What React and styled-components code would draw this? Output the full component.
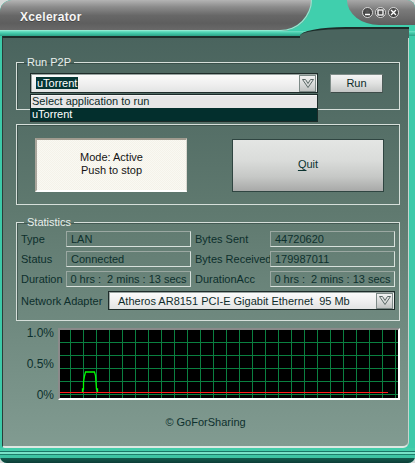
import React from "react";
import styled, { createGlobalStyle } from "styled-components";

const GlobalStyle = createGlobalStyle`
  html, body {
    margin: 0;
    padding: 0;
    background: #d8dbda;
  }
  body {
    font-family: "Liberation Sans", Arial, sans-serif;
    font-size: 11px;
    color: #0d2f2c;
  }
  * {
    box-sizing: border-box;
  }
`;

const Window = styled.div`
  width: 415px;
  height: 463px;
  display: flex;
  flex-direction: column;
  background: #3dcaa9;
  border-radius: 12px 8px 7px 7px;
  overflow: hidden;
`;

const TitleBar = styled.div`
  display: flex;
  height: 36px;
  flex-shrink: 0;
  background: linear-gradient(
    180deg,
    #40cfad 0,
    #40cfad 31px,
    #72e0c6 31px,
    #44ccab 33px,
    #2e9e86 36px
  );
`;

const TitleCap = styled.div`
  width: 312px;
  height: 31px;
  display: flex;
  align-items: center;
  padding: 3px 0 0 20px;
  background: linear-gradient(
    180deg,
    #b4b4b4 0%,
    #8c8c8c 22%,
    #676767 50%,
    #5e5e5e 75%,
    #6a6a6a 100%
  );
  border-bottom-right-radius: 31px 31px;
  box-shadow: inset -1px -1px 0 #8fe9d1;
`;

const TitleText = styled.span`
  color: #f6f6f6;
  font-weight: bold;
  font-size: 12px;
  letter-spacing: 0.3px;
  text-shadow: 0 1px 0 #444;
`;

const RightArea = styled.div`
  flex: 1;
  display: flex;
  flex-direction: column;
`;

const ButtonTab = styled.div`
  align-self: flex-end;
  width: 68px;
  height: 25px;
  display: flex;
  align-items: center;
  justify-content: flex-end;
  gap: 2px;
  padding-right: 16px;
  background: linear-gradient(180deg, #a8a8a8 0%, #7a7a7a 40%, #5e5e5e 100%);
  border-bottom-left-radius: 32px 25px;
`;

const CapButton = styled.div`
  width: 11px;
  height: 11px;
  border-radius: 50%;
  background: radial-gradient(circle at 50% 35%, #5a5a5a 0%, #2e2e2e 100%);
  border: 1px solid #d4d4d4;
  display: flex;
  align-items: center;
  justify-content: center;
`;

const Bump = styled.div`
  margin-top: auto;
  margin-left: -12px;
  margin-right: 6px;
  margin-bottom: -2px;
  height: 11px;
  background: #4a645e;
  border-top: 2px solid #1c2d2a;
  border-top-left-radius: 46px 9px;
  position: relative;
  z-index: 1;
`;

const Body = styled.div`
  flex: 1;
  display: flex;
  padding: 0 6px 0 2px;
  min-height: 0;
`;

const Panel = styled.div`
  flex: 1;
  display: flex;
  flex-direction: column;
  padding: 0 8px 0 13px;
  background: linear-gradient(180deg, #4a645e 0%, #5f796f 42%, #819b91 100%);
  border-top: 2px solid #1c2d2a;
  border-left: 1px solid #2a3d39;
  border-right: 1px solid #c6d4ce;
  border-bottom: 2px solid #dde7e2;
  border-bottom-right-radius: 6px;
  border-bottom-left-radius: 3px;
`;

const Group = styled.fieldset`
  margin: ${(p) => p.$top}px 0 0;
  padding: ${(p) => p.$pad};
  border: 1px solid #d6dfda;
  box-shadow: inset 1px 1px 0 rgba(30, 50, 46, 0.45);
  min-width: 0;
`;

const Legend = styled.legend`
  margin-left: ${(p) => p.$offset}px;
  padding: 0 3px;
  color: #e9efec;
  font-size: 11px;
  line-height: 12px;
`;

const Row = styled.div`
  display: flex;
  align-items: center;
  justify-content: ${(p) => p.$justify || "flex-start"};
`;

const ComboWrap = styled.div`
  position: relative;
  width: ${(p) => p.$width}px;
  height: ${(p) => p.$height}px;
`;

const Combo = styled.div`
  width: 100%;
  height: 100%;
  display: flex;
  align-items: center;
  padding-left: ${(p) => p.$indent}px;
  border: 1px solid #1e2c2a;
  box-shadow: inset 1px 1px 0 #9aa5a2;
  background: linear-gradient(180deg, #fcfcfc 0%, #eeeeee 60%, #e2e4e3 100%);
  color: #102c2a;
  white-space: pre;
`;

const Selected = styled.span`
  background: #063634;
  color: #ffffff;
  line-height: 12px;
  padding: 0 1px;
`;

const DropButton = styled.div`
  margin-left: auto;
  margin-right: 1px;
  width: 17px;
  height: ${(p) => p.$height}px;
  display: flex;
  align-items: center;
  justify-content: center;
  border: 1px solid #7d8a87;
  background: linear-gradient(180deg, #f2f2f2 0%, #d6d8d7 60%, #bfc2c1 100%);
`;

const DropList = styled.div`
  position: absolute;
  top: calc(100% + 1px);
  left: 0;
  width: 100%;
  border: 1px solid #1c2b29;
  z-index: 2;
`;

const DropItem = styled.div`
  height: 13px;
  line-height: 13px;
  padding-left: 1px;
  background: ${(p) => (p.$active ? "#032f2d" : "#e6e6e6")};
  color: ${(p) => (p.$active ? "#ffffff" : "#0c2a28")};
  box-shadow: ${(p) => (p.$active ? "none" : "inset 0 1px 0 #f6f6f6")};
`;

const SmallButton = styled.div`
  margin-left: 12px;
  width: 53px;
  height: 19px;
  display: flex;
  align-items: center;
  justify-content: center;
  border: 1px solid #7e8c88;
  border-bottom-color: #3e4c49;
  border-right-color: #4e5c59;
  background: linear-gradient(180deg, #f4f4f4 0%, #e0e1e0 50%, #c4c6c5 100%);
  color: #0c2a28;
`;

const ModeButton = styled.div`
  width: 152px;
  height: 54px;
  display: flex;
  flex-direction: column;
  align-items: center;
  justify-content: center;
  line-height: 13px;
  padding-bottom: 2px;
  color: #141414;
  background-color: #faf9f3;
  background-image: linear-gradient(
      45deg,
      rgba(205, 198, 170, 0.14) 25%,
      transparent 25%,
      transparent 75%,
      rgba(205, 198, 170, 0.14) 75%
    ),
    linear-gradient(
      45deg,
      rgba(205, 198, 170, 0.14) 25%,
      transparent 25%,
      transparent 75%,
      rgba(205, 198, 170, 0.14) 75%
    );
  background-size: 2px 2px;
  background-position: 0 0, 1px 1px;
  border-top: 2px solid #a09b8f;
  border-left: 2px solid #aaa69c;
  border-right: 1px solid #d9d7cf;
  border-bottom: 2px solid #ffffff;
`;

const QuitButton = styled.div`
  width: 152px;
  height: 53px;
  display: flex;
  align-items: center;
  justify-content: center;
  padding-bottom: 2px;
  color: #0c3431;
  border: 1px solid #2f4541;
  background: linear-gradient(
    180deg,
    #e4e6e4 0%,
    #dadcda 40%,
    #c6c8c6 72%,
    #a8a9a8 100%
  );
  u {
    text-underline-offset: 2px;
  }
`;

const StatsGrid = styled.div`
  display: grid;
  grid-template-columns: 45px 125px 79px 125px;
  grid-auto-rows: 16px;
  row-gap: 4px;
  align-items: center;
`;

const StatLabel = styled.div`
  color: #0d2f2c;
  padding-left: ${(p) => (p.$second ? 4 : 0)}px;
  white-space: nowrap;
`;

const StatField = styled.div`
  height: 16px;
  display: flex;
  align-items: center;
  padding-left: ${(p) => (p.$center ? 0 : 4)}px;
  justify-content: ${(p) => (p.$center ? "center" : "flex-start")};
  border-top: 1px solid #9ba8a2;
  border-left: 1px solid #9ba8a2;
  border-right: 1px solid #d8e1dc;
  border-bottom: 1px solid #d8e1dc;
  color: #0d302d;
  white-space: pre;
`;

const AdapterRow = styled.div`
  display: flex;
  align-items: center;
  margin-top: 4px;
`;

const AdapterLabel = styled.div`
  width: 87px;
  color: #0d2f2c;
  white-space: nowrap;
`;

const GraphRow = styled.div`
  display: flex;
  margin-top: 7px;
  gap: 4px;
`;

const Scale = styled.div`
  width: 38px;
  height: 74px;
  margin-top: -1px;
  display: flex;
  flex-direction: column;
  justify-content: space-between;
  align-items: flex-end;
  font-size: 12px;
  line-height: 12px;
  color: #0d302d;
`;

const GraphBox = styled.div`
  width: 342px;
  height: 72px;
  background: #000;
  border-top: 2px solid #8a8a8a;
  border-left: 2px solid #8a8a8a;
  border-right: 2px solid #ffffff;
  border-bottom: 2px solid #ffffff;
  svg {
    display: block;
  }
`;

const Copyright = styled.div`
  margin-top: 15px;
  padding-right: 5px;
  text-align: center;
  line-height: 13px;
  color: #0e302d;
`;

const BottomFrame = styled.div`
  height: 15px;
  flex-shrink: 0;
  background: linear-gradient(
    180deg,
    #44cdaa 0,
    #44cdaa 3px,
    #1b7566 3px,
    #1b7566 4px,
    #78e2c8 4px,
    #78e2c8 6px,
    #1d7d6a 6px,
    #1d7d6a 7px,
    #3dc3a3 7px,
    #3dc3a3 10px,
    #13594d 10px,
    #0d3d36 15px
  );
`;

const Chevron = () => (
  <svg width="12" height="9" viewBox="0 0 12 9">
    <polygon
      points="0.5,0.5 3.5,0.5 6,4.5 8.5,0.5 11.5,0.5 6,8.5"
      fill="none"
      stroke="#5a6866"
      strokeWidth="1"
    />
  </svg>
);

const Graph = () => {
  const vx = Array.from({ length: 26 }, (_, i) => 10.5 + i * 13);
  const hy = [12.5, 25.5, 38.5, 51.5, 64.5];
  return (
    <svg width="338" height="68" viewBox="0 0 338 68" shapeRendering="crispEdges">
      {vx.map((x) => (
        <line key={x} x1={x} y1="0" x2={x} y2="68" stroke="#0a8040" strokeWidth="1" />
      ))}
      {hy.map((y) => (
        <line key={y} x1="0" y1={y} x2="338" y2={y} stroke="#0a8040" strokeWidth="1" />
      ))}
      <line x1="0" y1="62.5" x2="328" y2="62.5" stroke="#ff1a1a" strokeWidth="1" />
      <polyline
        points="22.5,62 22.5,59 23.5,59 23.5,52 24.5,46 25.5,42 34.5,42 35.5,45.5 36.5,59 37.5,59 37.5,62"
        fill="none"
        stroke="#00ff00"
        strokeWidth="1.3"
        shapeRendering="auto"
      />
    </svg>
  );
};

export default function App() {
  return (
    <>
      <GlobalStyle />
      <Window>
        <TitleBar>
          <TitleCap>
            <TitleText>Xcelerator</TitleText>
          </TitleCap>
          <RightArea>
            <ButtonTab>
              <CapButton>
                <svg width="7" height="7" viewBox="0 0 7 7">
                  <line x1="1" y1="5.5" x2="6" y2="5.5" stroke="#fff" strokeWidth="1.4" />
                </svg>
              </CapButton>
              <CapButton>
                <svg width="7" height="7" viewBox="0 0 7 7">
                  <rect x="1" y="1" width="5" height="5" fill="none" stroke="#fff" strokeWidth="1.3" />
                </svg>
              </CapButton>
              <CapButton>
                <svg width="7" height="7" viewBox="0 0 7 7">
                  <path d="M1 1 L6 6 M6 1 L1 6" stroke="#fff" strokeWidth="1.3" />
                </svg>
              </CapButton>
            </ButtonTab>
            <Bump />
          </RightArea>
        </TitleBar>

        <Body>
          <Panel>
            <Group $top={18} $pad="5px 15px 16px 13px">
              <Legend $offset={-6}>Run P2P</Legend>
              <Row>
                <ComboWrap $width={288} $height={20}>
                  <Combo $indent={5}>
                    <Selected>uTorrent</Selected>
                    <DropButton $height={17}>
                      <Chevron />
                    </DropButton>
                  </Combo>
                  <DropList>
                    <DropItem>Select application to run</DropItem>
                    <DropItem $active>uTorrent</DropItem>
                  </DropList>
                </ComboWrap>
                <SmallButton>Run</SmallButton>
              </Row>
            </Group>

            <Group $top={14} $pad="13px 15px 12px 18px">
              <Row $justify="space-between">
                <ModeButton>
                  <span>Mode: Active</span>
                  <span>Push to stop</span>
                </ModeButton>
                <QuitButton>
                  <span>
                    <u>Q</u>uit
                  </span>
                </QuitButton>
              </Row>
            </Group>

            <Group $top={11} $pad="3px 3px 10px 4px">
              <Legend $offset={3}>Statistics</Legend>
              <StatsGrid>
                <StatLabel>Type</StatLabel>
                <StatField>LAN</StatField>
                <StatLabel $second>Bytes Sent</StatLabel>
                <StatField>44720620</StatField>

                <StatLabel>Status</StatLabel>
                <StatField>Connected</StatField>
                <StatLabel $second>Bytes Received</StatLabel>
                <StatField>179987011</StatField>

                <StatLabel>Duration</StatLabel>
                <StatField $center>{"0 hrs :  2 mins : 13 secs"}</StatField>
                <StatLabel $second>DurationAcc</StatLabel>
                <StatField $center>{"0 hrs :  2 mins : 13 secs"}</StatField>
              </StatsGrid>
              <AdapterRow>
                <AdapterLabel>Network Adapter</AdapterLabel>
                <ComboWrap $width={287} $height={19}>
                  <Combo $indent={9}>
                    {"Atheros AR8151 PCI-E Gigabit Ethernet  95 Mb"}
                    <DropButton $height={16}>
                      <Chevron />
                    </DropButton>
                  </Combo>
                </ComboWrap>
              </AdapterRow>
            </Group>

            <GraphRow>
              <Scale>
                <span>1.0%</span>
                <span>0.5%</span>
                <span>0%</span>
              </Scale>
              <GraphBox>
                <Graph />
              </GraphBox>
            </GraphRow>

            <Copyright>© GoForSharing</Copyright>
          </Panel>
        </Body>

        <BottomFrame />
      </Window>
    </>
  );
}
